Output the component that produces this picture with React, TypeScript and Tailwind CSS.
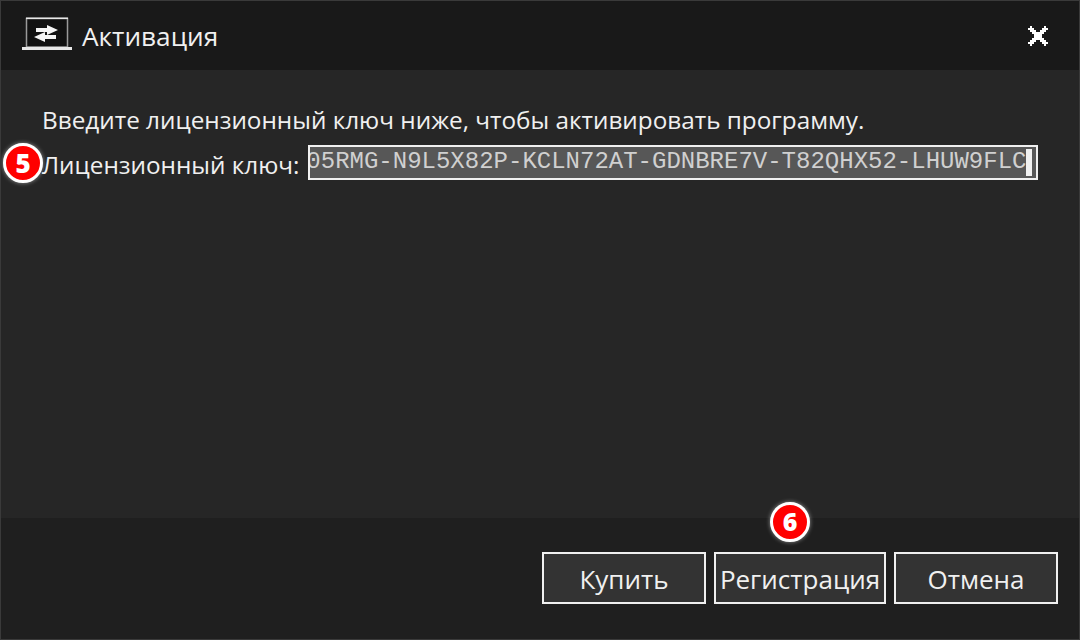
export default function App() {
  const btn = "h-[52px] border-[2px] border-[#f0f0f0] bg-[#333333] text-[26px] text-[#f0f0f0] flex items-center justify-center pt-[3px]";
  return (
    <div className="relative w-[1080px] h-[640px] overflow-hidden flex flex-col border border-[#3a3a3a] bg-[#262626] text-[#f0f0f0] font-['Open_Sans','Noto_Sans',sans-serif]">
      <div className="h-[69px] shrink-0 bg-[#191919] flex items-center pl-[21px] pr-[31px]">
        <svg width="52" height="34" viewBox="0 0 52 34" className="mr-[8px] mt-[-3px]">
          <path d="M4.5 1.5H45.5V30H4.5Z" fill="#111" stroke="#9a9a9a" strokeWidth="1.5" />
          <rect x="4" y="0.5" width="42" height="1.5" fill="#e8e8e8" />
          <rect x="0" y="30" width="50" height="3" fill="#e8e8e8" />
          <path d="M14 11H25V8L36 13L25 18V15H14Z" fill="#f5f5f5" />
          <path d="M34 18H23V15L12 20L23 25V22H34Z" fill="#f5f5f5" />
        </svg>
        <span className="text-[26.2px] flex-1 pt-[2px]">Активация</span>
        <svg width="20" height="20" viewBox="0 0 20 20" shapeRendering="crispEdges">
          <path d="M0 2H2V0H4V2H6V4H8V6H12V4H14V2H16V0H18V2H20V4H18V6H16V8H14V12H16V14H18V16H20V18H18V20H16V18H14V16H12V14H8V16H6V18H4V20H2V18H0V16H2V14H4V12H6V8H4V6H2V4H0Z" fill="#fff" />
        </svg>
      </div>
      <div className="flex-1 pl-[41px] pr-[41px] pt-[35px]">
        <div className="text-[24.3px] leading-[30px] whitespace-nowrap">Введите лицензионный ключ ниже, чтобы активировать программу.</div>
        <div className="flex items-center mt-[2px] h-[50px]">
          <span className="text-[24.3px] mr-[9px] mt-[6px] whitespace-nowrap shrink-0">Лицензионный ключ:</span>
          <div className="w-[730px] h-[35px] shrink-0 border-[2px] border-[#f0f0f0] bg-[#575757] overflow-hidden flex justify-end items-center pr-[4px]">
            <span className="font-['Liberation_Mono',monospace] text-[24px] whitespace-nowrap text-[#d0d0d0] shrink-0">05RMG-N9L5X82P-KCLN72AT-GDNBRE7V-T82QHX52-LHUW9FLC</span>
            <span className="w-[6px] h-[27px] bg-[#f0f0f0] shrink-0"></span>
          </div>
        </div>
      </div>
      <div className="h-[121px] shrink-0 bg-[#1f1f1f] flex justify-end gap-[8px] pt-[34px] pr-[21px]">
        <div className={btn + " w-[164px]"}>Купить</div>
        <div className={btn + " w-[172px]"}>Регистрация</div>
        <div className={btn + " w-[164px]"}>Отмена</div>
      </div>
      <div className="absolute left-[2px] top-[142px] w-[40px] h-[40px] rounded-full bg-[#ff0000] border-[3px] border-white shadow-[0_0_4px_rgba(255,255,255,0.5)] flex items-center justify-center text-white text-[26px] font-extrabold">5</div>
      <div className="absolute left-[769px] top-[501px] w-[40px] h-[40px] rounded-full bg-[#ff0000] border-[3px] border-white shadow-[0_0_4px_rgba(255,255,255,0.5)] flex items-center justify-center text-white text-[25px] font-extrabold">6</div>
    </div>
  );
}
